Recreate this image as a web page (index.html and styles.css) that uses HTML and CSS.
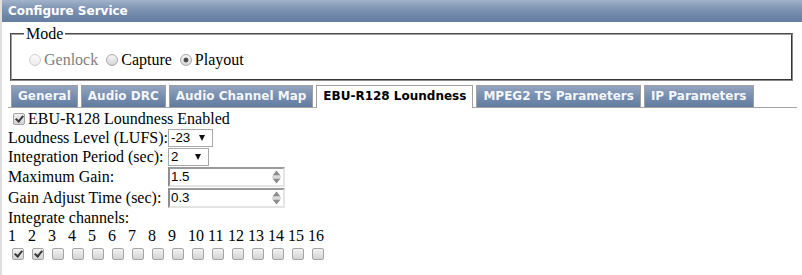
FILE: index.html
```html
<!DOCTYPE html>
<html>
<head>
<meta charset="utf-8">
<title>Configure Service</title>
<link rel="stylesheet" href="styles.css">
</head>
<body>
<div class="dialog">
  <div class="titlebar">Configure Service</div>
  <div class="content">
    <fieldset class="mode">
      <legend>Mode</legend>
      <label class="opt disabled"><input type="radio" name="mode" disabled>Genlock</label>
      <label class="opt"><input type="radio" name="mode">Capture</label>
      <label class="opt"><input type="radio" name="mode" checked>Playout</label>
    </fieldset>
    <ul class="tabs">
      <li class="tab">General</li>
      <li class="tab">Audio DRC</li>
      <li class="tab">Audio Channel Map</li>
      <li class="tab active">EBU-R128 Loundness</li>
      <li class="tab">MPEG2 TS Parameters</li>
      <li class="tab">IP Parameters</li>
    </ul>
    <div class="panel">
      <label class="enable"><input type="checkbox" class="cb" checked>EBU-R128 Loundness Enabled</label>
      <div class="form">
        <span class="lbl">Loudness Level (LUFS):</span>
        <span class="selwrap"><select class="sel w-lufs"><option>-23</option></select></span>
        <span class="lbl">Integration Period (sec):</span>
        <span class="selwrap"><select class="sel w-int"><option>2</option></select></span>
        <span class="lbl">Maximum Gain:</span>
        <span class="numwrap"><input class="num" type="text" value="1.5"><svg class="spin" width="9" height="14" viewBox="0 0 9 14"><polygon points="0.5,5.5 4.5,0.5 8.5,5.5" fill="#8c8c8c"/><rect x="0" y="6.5" width="9" height="1" fill="#b5b5b5"/><polygon points="0.5,8.5 8.5,8.5 4.5,13.5" fill="#8c8c8c"/></svg></span>
        <span class="lbl">Gain Adjust Time (sec):</span>
        <span class="numwrap"><input class="num" type="text" value="0.3"><svg class="spin" width="9" height="14" viewBox="0 0 9 14"><polygon points="0.5,5.5 4.5,0.5 8.5,5.5" fill="#8c8c8c"/><rect x="0" y="6.5" width="9" height="1" fill="#b5b5b5"/><polygon points="0.5,8.5 8.5,8.5 4.5,13.5" fill="#8c8c8c"/></svg></span>
      </div>
      <div class="ichead">Integrate channels:</div>
      <div class="channels">
        <span class="chn">1</span><span class="chn">2</span><span class="chn">3</span><span class="chn">4</span>
        <span class="chn">5</span><span class="chn">6</span><span class="chn">7</span><span class="chn">8</span>
        <span class="chn">9</span><span class="chn">10</span><span class="chn">11</span><span class="chn">12</span>
        <span class="chn">13</span><span class="chn">14</span><span class="chn">15</span><span class="chn">16</span>
        <span class="chc"><input type="checkbox" class="cb" checked></span>
        <span class="chc"><input type="checkbox" class="cb" checked></span>
        <span class="chc"><input type="checkbox" class="cb"></span>
        <span class="chc"><input type="checkbox" class="cb"></span>
        <span class="chc"><input type="checkbox" class="cb"></span>
        <span class="chc"><input type="checkbox" class="cb"></span>
        <span class="chc"><input type="checkbox" class="cb"></span>
        <span class="chc"><input type="checkbox" class="cb"></span>
        <span class="chc"><input type="checkbox" class="cb"></span>
        <span class="chc"><input type="checkbox" class="cb"></span>
        <span class="chc"><input type="checkbox" class="cb"></span>
        <span class="chc"><input type="checkbox" class="cb"></span>
        <span class="chc"><input type="checkbox" class="cb"></span>
        <span class="chc"><input type="checkbox" class="cb"></span>
        <span class="chc"><input type="checkbox" class="cb"></span>
        <span class="chc"><input type="checkbox" class="cb"></span>
      </div>
    </div>
  </div>
</div>
</body>
</html>
```

FILE: styles.css
```css
html, body {
  margin: 0;
  padding: 0;
  background: #ffffff;
}
body {
  font-family: "Liberation Serif", "Times New Roman", serif;
  font-size: 16px;
  color: #000;
}
.dialog {
  border-left: 2px solid #e0e0e0;
  height: 275px;
  box-sizing: border-box;
}
.titlebar {
  height: 22px;
  line-height: 22px;
  padding-left: 6px;
  background: linear-gradient(to bottom, #a2b3ca 0%, #8398b6 35%, #6c85a7 75%, #647ea1 100%);
  color: #ffffff;
  font-family: "DejaVu Sans", Verdana, sans-serif;
  font-weight: bold;
  font-size: 12px;
}
.content {
  padding: 3px 7px 0 6px;
}
.mode {
  margin: 0 2px;
  border: 2px groove #c0c0c0;
  border-color: #a0a0a0 #8a8a8a #8a8a8a #a0a0a0;
  border-style: groove;
  padding: 8px 12px 10px;
  line-height: 18px;
}
.mode legend {
  padding: 0 2px;
  line-height: 18px;
}
.opt {
  display: inline-flex;
  align-items: center;
  vertical-align: top;
}
.opt + .opt {
  margin-left: 4px;
}
.opt.disabled {
  color: #808080;
}
.opt input {
  -webkit-appearance: none;
  appearance: none;
  box-sizing: border-box;
  width: 12px;
  height: 12px;
  margin: 0 3px 0 0;
  border: 1px solid #a8a8a8;
  border-radius: 50%;
  background: linear-gradient(to bottom, #f6f6f6, #d6d6d6);
}
.opt:first-child input, .opt.disabled input {
  margin-left: 5px;
}
.opt input:checked {
  background: radial-gradient(circle at 50% 50%, #4a4a4a 0, #4a4a4a 2px, rgba(0,0,0,0) 2.8px), linear-gradient(to bottom, #f6f6f6, #d6d6d6);
}
.opt input:disabled {
  border-color: #cfcfcf;
  background: linear-gradient(to bottom, #fbfbfb, #ececec);
}
.tabs {
  list-style: none;
  margin: 4px -2px 0 0;
  padding: 0 0 0 3px;
  display: flex;
  gap: 3px;
  border-bottom: 1px solid #a4a4a4;
  height: 22px;
  box-sizing: content-box;
}
.tab {
  height: 21px;
  line-height: 21px;
  padding: 0 6px;
  border: 1px solid #a0a0a0;
  border-bottom: 0;
  background: linear-gradient(to bottom, #93a5bf 0%, #7a90b1 45%, #607b9f 100%);
  color: #f4f6fa;
  font-family: "DejaVu Sans", Verdana, sans-serif;
  font-weight: bold;
  font-size: 12px;
  white-space: nowrap;
}
.tab.active {
  background: #ffffff;
  color: #000000;
  height: 22px;
  margin-bottom: -1px;
}
.panel {
  padding-top: 1px;
}
.enable {
  display: flex;
  align-items: center;
  height: 19px;
  line-height: 19px;
}
.cb {
  -webkit-appearance: none;
  appearance: none;
  position: relative;
  box-sizing: border-box;
  width: 12px;
  height: 12px;
  margin: 0 3px 0 4px;
  border: 1px solid #a4a4a4;
  border-radius: 2px;
  background: linear-gradient(to bottom, #f2f2f2, #d2d2d2);
}
.cb:checked::after {
  content: "";
  position: absolute;
  left: 3px;
  top: 0px;
  width: 3px;
  height: 6px;
  border-right: 2px solid #3a3a3a;
  border-bottom: 2px solid #3a3a3a;
  transform: rotate(40deg);
}
.enable .cb {
  margin-left: 5px;
  margin-top: 1px;
}
.form {
  display: grid;
  grid-template-columns: 160px auto;
  grid-template-rows: 19px 19px 21px 21px;
  align-items: center;
}
.lbl {
  white-space: nowrap;
  line-height: 18px;
}
.selwrap, .numwrap {
  position: relative;
  justify-self: start;
  display: inline-block;
  line-height: 0;
}
.sel {
  -webkit-appearance: none;
  appearance: none;
  box-sizing: border-box;
  height: 18px;
  margin: 0;
  padding: 0 0 0 2px;
  border: 1px solid #a9a9a9;
  border-radius: 0;
  background: #ffffff;
  font-family: "Liberation Sans", Arial, sans-serif;
  font-size: 13.333px;
  color: #000;
}
.w-lufs { width: 45px; }
.w-int { width: 41px; }
.selwrap::after {
  content: "";
  position: absolute;
  right: 8px;
  top: 6px;
  border-left: 3.5px solid transparent;
  border-right: 3.5px solid transparent;
  border-top: 6px solid #111111;
}
.num {
  box-sizing: border-box;
  width: 117px;
  height: 20px;
  margin: 0;
  padding: 0 0 0 1px;
  border: 2px solid;
  border-color: #9a9a9a #e4e4e4 #e4e4e4 #8e8e8e;
  background: #ffffff;
  font-family: "Liberation Sans", Arial, sans-serif;
  font-size: 13.333px;
  color: #000;
}
.spin {
  position: absolute;
  right: 4px;
  top: 3px;
}
.ichead {
  line-height: 18px;
  margin-top: 1px;
}
.channels {
  display: grid;
  grid-template-columns: repeat(16, 20px);
  grid-template-rows: 18px 17px;
}
.chn {
  line-height: 18px;
}
.chc {
  display: flex;
  align-items: flex-start;
  padding-top: 3px;
}
.chc .cb {
  margin: 0 0 0 4px;
}
```
